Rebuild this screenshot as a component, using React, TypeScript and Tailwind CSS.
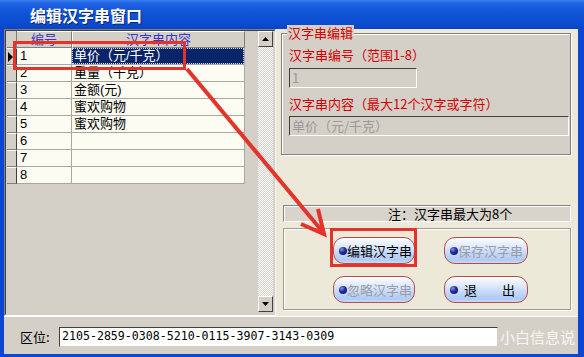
import React from "react";

const rows: [string, string][] = [
  ["1", "单价（元/千克）"],
  ["2", "重量（千克）"],
  ["3", "金额(元)"],
  ["4", "蜜欢购物"],
  ["5", "蜜欢购物"],
  ["6", ""],
  ["7", ""],
  ["8", ""],
];

function XpBtn({ label, disabled, exit }: { label: string; disabled?: boolean; exit?: boolean }) {
  return (
    <div className="h-[27px] rounded-[11px] border border-[#b84a48] bg-[linear-gradient(to_bottom,#fbfdff_0%,#e2ecfd_30%,#bcd3f7_70%,#b0caf3_88%,#c9dbf8_100%)] flex items-center pl-[5px] text-[13px] leading-[15px] shadow-[inset_0_1px_0_#ffffff]">
      <span className="w-[8px] h-[8px] rounded-full shrink-0 bg-[radial-gradient(circle_at_35%_30%,#8a96ee_0%,#2430a0_40%,#0a0f55_100%)]" />
      {exit ? (
        <>
          <span className="ml-[6px] text-black">退</span>
          <span className="ml-auto mr-[12px] text-black">出</span>
        </>
      ) : (
        <span className={disabled ? "text-[#9c9ca4]" : "text-black"}>{label}</span>
      )}
    </div>
  );
}

function ScrollBtn({ up }: { up?: boolean }) {
  return (
    <div className="h-[16px] bg-[#d4d0c8] border-t border-l border-t-white border-l-white border-r border-b border-r-[#404040] border-b-[#404040] flex items-center justify-center">
      <svg width="7" height="4" viewBox="0 0 7 4">
        {up ? <polygon points="3.5,0 7,4 0,4" fill="#000" /> : <polygon points="0,0 7,0 3.5,4" fill="#000" />}
      </svg>
    </div>
  );
}

export default function App() {
  return (
    <div className="w-[584px] h-[357px] bg-[#0b47d2] flex flex-col relative overflow-hidden font-['Noto_Sans_CJK_SC',sans-serif]">
      {/* title bar */}
      <div className="h-[29px] shrink-0 bg-[linear-gradient(to_bottom,#3a80f0_0%,#1f62e2_12%,#0f54d8_45%,#0b4acf_85%,#0a44c4_100%)] flex items-center pl-[30px]">
        <span className="text-white font-bold text-[16px] leading-[20px] [text-shadow:1px_1px_0_#0a2470]">编辑汉字串窗口</span>
      </div>

      {/* body */}
      <div className="flex-1 ml-[4px] mr-[6px] mb-[3px] bg-[#d4d0c8] flex flex-col">
        <div className="h-[287px] flex shrink-0">
          {/* left grid panel */}
          <div className="w-[272px] h-full border-l border-t border-l-[#808080] border-t-[#808080] border-r border-b border-r-white border-b-white">
            <div className="w-full h-full border-l border-t border-l-[#404040] border-t-[#404040] border-r border-b border-r-[#d4d0c8] border-b-[#d4d0c8] flex pl-[1px]">
              <div className="w-[238px] flex flex-col text-[13px] font-['Liberation_Sans','Noto_Sans_CJK_SC',sans-serif]">
                {/* header */}
                <div className="flex h-[17px]">
                  <div className="w-[10px] bg-[#d4d0c8] border-r border-b border-r-[#808080] border-b-[#808080]" />
                  <div className="w-[55px] bg-[#d4d0c8] border-r border-b border-r-[#808080] border-b-[#808080] border-t border-t-white flex items-center justify-center text-[#3535c8]">
                    <span className="leading-[14px]">编号</span>
                  </div>
                  <div className="w-[173px] bg-[#d4d0c8] border-r border-b border-r-[#808080] border-b-[#808080] border-t border-t-white border-l border-l-white flex items-center justify-center text-[#3535c8]">
                    <span className="leading-[14px]">汉字串内容</span>
                  </div>
                </div>
                {rows.map(([n, t], i) => (
                  <div key={n} className="flex h-[17px]">
                    <div className="w-[10px] bg-[#d4d0c8] border-r border-b border-r-[#404040] border-b-[#808080] border-t border-t-white flex items-center">
                      {i === 0 && (
                        <svg width="5" height="10" viewBox="0 0 5 10" className="ml-[1px]">
                          <polygon points="0,0 5,5 0,10" fill="#000" />
                        </svg>
                      )}
                    </div>
                    <div className="w-[55px] bg-[#fdfcf3] border-r border-b border-r-[#a8a8a0] border-b-[#a8a8a0] flex items-center pl-[3px] text-black">
                      <span className="leading-[14px]">{n}</span>
                    </div>
                    {i === 0 ? (
                      <div className="w-[173px] bg-[#0a246a] border-r border-b border-r-[#a8a8a0] border-b-[#a8a8a0] flex items-center">
                        <div className="w-full h-full border border-dotted border-[#e0e0e0] flex items-center pl-[1px] text-white">
                          <span className="leading-[14px]">{t}</span>
                        </div>
                      </div>
                    ) : (
                      <div className="w-[173px] bg-[#fdfcf3] border-r border-b border-r-[#a8a8a0] border-b-[#a8a8a0] flex items-center pl-[2px] text-black">
                        <span className="leading-[14px]">{t}</span>
                      </div>
                    )}
                  </div>
                ))}
              </div>
              <div className="w-[13px]" />
              <div className="w-[15px] flex flex-col mb-[2px]">
                <ScrollBtn up />
                <div className="flex-1 bg-[repeating-conic-gradient(#ffffff_0%_25%,#d4d0c8_0%_50%)] bg-[length:2px_2px]" />
                <ScrollBtn />
              </div>
            </div>
          </div>

          {/* right panel */}
          <div className="flex-1 h-full bg-[#ece9d8] flex flex-col pl-[5px] pt-[4px]">
            <div className="relative w-[290px] h-[122px] bg-[#d4d0c8] border border-[#808080] shadow-[inset_1px_1px_0_#ffffff,1px_1px_0_#ffffff] pl-[7px] pt-[13px] flex flex-col text-[13px] leading-[16px] text-[#d40000]">
              <span className="absolute left-[5px] -top-[9px] px-[1px] bg-[#d4d0c8] leading-[16px]">汉字串编辑</span>
              <div>汉字串编号（范围1-8）</div>
              <div className="mt-[5px] w-[128px] h-[20px] bg-[#d4d0c8] border-t border-l border-t-[#404040] border-l-[#404040] border-r border-b border-r-white border-b-white flex items-center pl-[2px] text-[#9a9a9a]">1</div>
              <div className="mt-[8px]">汉字串内容（最大12个汉字或字符）</div>
              <div className="mt-[4px] w-[280px] h-[20px] bg-[#d4d0c8] border-t border-l border-t-[#404040] border-l-[#404040] border-r border-b border-r-white border-b-white flex items-center pl-[2px] text-[#9a9a9a]">单价（元/千克）</div>
            </div>

            <div className="mt-[50px] ml-[2px] w-[288px] h-[17px] bg-[#d8d4cc] border border-t-[#808080] border-l-[#808080] border-r-white border-b-white shadow-[inset_1px_1px_0_#ffffff] flex items-center pl-[104px] text-[13px] leading-[14px] text-black">
              注：汉字串最大为8个
            </div>

            <div className="mt-[6px] ml-[2px] w-[288px] h-[82px] border border-[#a09c94] shadow-[inset_1px_1px_0_#ffffff,1px_1px_0_#ffffff] grid grid-cols-[82px_84px] content-start gap-x-[29px] gap-y-[12px] pl-[49px] pt-[8px]">
              <XpBtn label="编辑汉字串" />
              <XpBtn label="保存汉字串" disabled />
              <XpBtn label="忽略汉字串" disabled />
              <XpBtn label="" exit />
            </div>
          </div>
        </div>

        {/* bottom strip */}
        <div className="flex-1 border-t border-t-white flex items-start pt-[10px] pl-[16px]">
          <span className="text-[13px] leading-[20px] text-black w-[39px]">区位:</span>
          <div className="w-[439px] h-[20px] bg-white border-t border-l border-t-[#404040] border-l-[#404040] border-r border-b border-r-[#d4d0c8] border-b-[#d4d0c8] flex items-center pl-[2px] font-['DejaVu_Sans_Mono',monospace] text-[11.6px] text-black">
            2105-2859-0308-5210-0115-3907-3143-0309
          </div>
        </div>
      </div>

      {/* overlays: annotation marks */}
      <div className="absolute left-[13px] top-[41px] w-[173px] h-[29px] border-[3px] border-[#e4332a]" />
      <div className="absolute left-[330px] top-[228px] w-[87px] h-[39px] border-[3px] border-[#e4332a]" />
      <svg className="absolute left-0 top-0 pointer-events-none" width="584" height="357" viewBox="0 0 584 357">
        <line x1="187" y1="69" x2="322" y2="231" stroke="#e4332a" strokeWidth="4" />
        <polyline points="318,209 324,234 301,224" fill="none" stroke="#e4332a" strokeWidth="4" strokeLinejoin="miter" />
      </svg>
      <div className="absolute left-[500px] top-[328px] text-[15px] leading-[18px] text-white/80">小白信息说</div>
    </div>
  );
}
